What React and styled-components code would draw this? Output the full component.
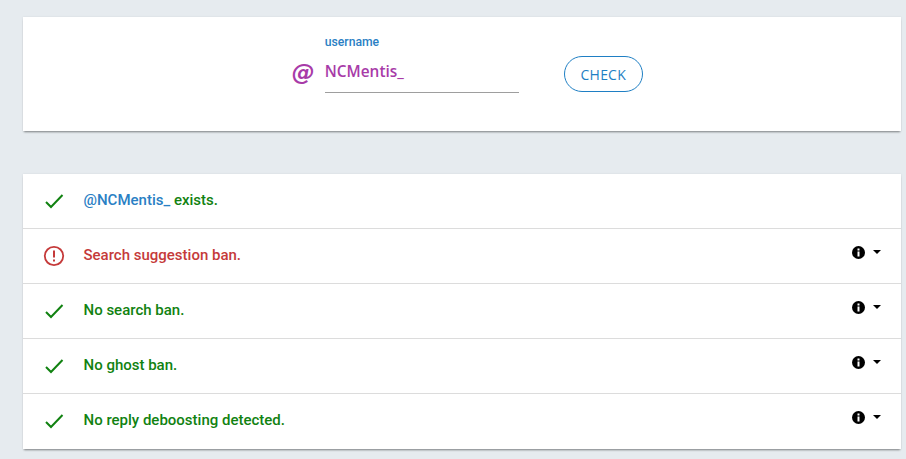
import React from 'react';
import styled, { createGlobalStyle } from 'styled-components';

const GlobalStyle = createGlobalStyle`
  html, body {
    margin: 0;
    height: 100%;
    background: #e6ebef;
    overflow: hidden;
  }
`;

const Page = styled.div`
  padding: 17px 5px 0 22.5px;
  font-family: Roboto, sans-serif;
`;

const Card = styled.div`
  background: #fff;
  box-shadow: 0 2px 2px -1px rgba(0, 0, 0, 0.45), 0 0 2px rgba(0, 0, 0, 0.08);
`;

const SearchCard = styled(Card)`
  height: 114px;
  margin-bottom: 43px;
  display: flex;
  justify-content: center;
  padding-left: 11px;
  box-sizing: border-box;
`;

const ResultsCard = styled(Card)`
  padding-bottom: 1px;
`;

const AtSign = styled.div`
  font-family: "DejaVu Sans", sans-serif;
  font-style: italic;
  font-weight: 700;
  font-size: 23px;
  line-height: 30px;
  color: #a83ba8;
  margin: 40px 10px 0 0;
`;

const Field = styled.div`
  width: 194px;
  height: 75px;
  border-bottom: 1px solid #9e9e9e;
  display: flex;
  flex-direction: column;
`;

const FieldLabel = styled.label`
  font-size: 12.2px;
  font-weight: 500;
  line-height: 14px;
  color: #2a80c4;
  margin-top: 18px;
`;

const FieldValue = styled.div`
  font-family: "Open Sans", sans-serif;
  font-size: 15.4px;
  font-weight: 600;
  line-height: 22px;
  color: #a83ba8;
  margin-top: 12px;
`;

const CheckButton = styled.button`
  width: 79px;
  height: 36px;
  margin: 39px 0 0 45px;
  padding: 0;
  background: #fff;
  border: 1px solid #1f7fc4;
  border-radius: 18px;
  font-family: "Open Sans", sans-serif;
  font-size: 14px;
  letter-spacing: 0.2px;
  color: #1f7fc4;
`;

const Row = styled.div`
  height: 55px;
  box-sizing: border-box;
  display: flex;
  align-items: center;
  padding: 0 20px 0 20px;
  border-top: 1px solid #dcdcdc;
  font-size: 15px;
  font-weight: 500;
  color: ${(p) => (p.$error ? '#c53a3a' : '#118211')};

  &:first-child {
    height: 54px;
    border-top: none;
  }
`;

const StatusIcon = styled.svg`
  width: 22px;
  height: 22px;
  margin-right: 19px;
  flex: none;
`;

const Message = styled.div`
  flex: 1;
  margin-top: -3px;
`;

const Handle = styled.span`
  color: #2a80c4;
`;

const Details = styled.div`
  display: flex;
  align-items: center;
  margin-top: -8px;
`;

const InfoIcon = styled.svg`
  width: 13px;
  height: 13px;
  margin-right: 8px;
`;

const Caret = styled.span`
  width: 0;
  height: 0;
  border-top: 4px solid #000;
  border-left: 4px solid transparent;
  border-right: 4px solid transparent;
`;

const CheckIcon = () => (
  <StatusIcon viewBox="0 0 22 22" fill="none" stroke="#118211" strokeWidth="2">
    <path d="M3 12L8 17L19.500 5" />
  </StatusIcon>
);

const AlertIcon = () => (
  <StatusIcon viewBox="0 0 22 22" fill="none" stroke="#c53a3a">
    <circle cx="11" cy="11" r="9.200" strokeWidth="1.800" />
    <path d="M11 5.500V12.500" strokeWidth="2" />
    <path d="M11 14.500V16.500" strokeWidth="2" />
  </StatusIcon>
);

const DetailsToggle = () => (
  <Details>
    <InfoIcon viewBox="0 0 13 13">
      <circle cx="6.500" cy="6.500" r="6.500" fill="#000" />
      <rect x="5.500" y="2.500" width="2" height="2" fill="#fff" />
      <rect x="5.500" y="5.500" width="2" height="5" fill="#fff" />
    </InfoIcon>
    <Caret />
  </Details>
);

const results = [
  { id: 'suggestion', text: 'Search suggestion ban.', error: true },
  { id: 'search', text: 'No search ban.' },
  { id: 'ghost', text: 'No ghost ban.' },
  { id: 'reply', text: 'No reply deboosting detected.' },
];

const App = () => {
  return (
    <Page>
      <GlobalStyle />
      <SearchCard>
        <AtSign>@</AtSign>
        <Field>
          <FieldLabel>username</FieldLabel>
          <FieldValue>NCMentis_</FieldValue>
        </Field>
        <CheckButton>CHECK</CheckButton>
      </SearchCard>
      <ResultsCard>
        <Row>
          <CheckIcon />
          <Message>
            <Handle>@NCMentis_</Handle> exists.
          </Message>
        </Row>
        {results.map((r) => (
          <Row key={r.id} $error={r.error}>
            {r.error ? <AlertIcon /> : <CheckIcon />}
            <Message>{r.text}</Message>
            <DetailsToggle />
          </Row>
        ))}
      </ResultsCard>
    </Page>
  );
};

export default App;
